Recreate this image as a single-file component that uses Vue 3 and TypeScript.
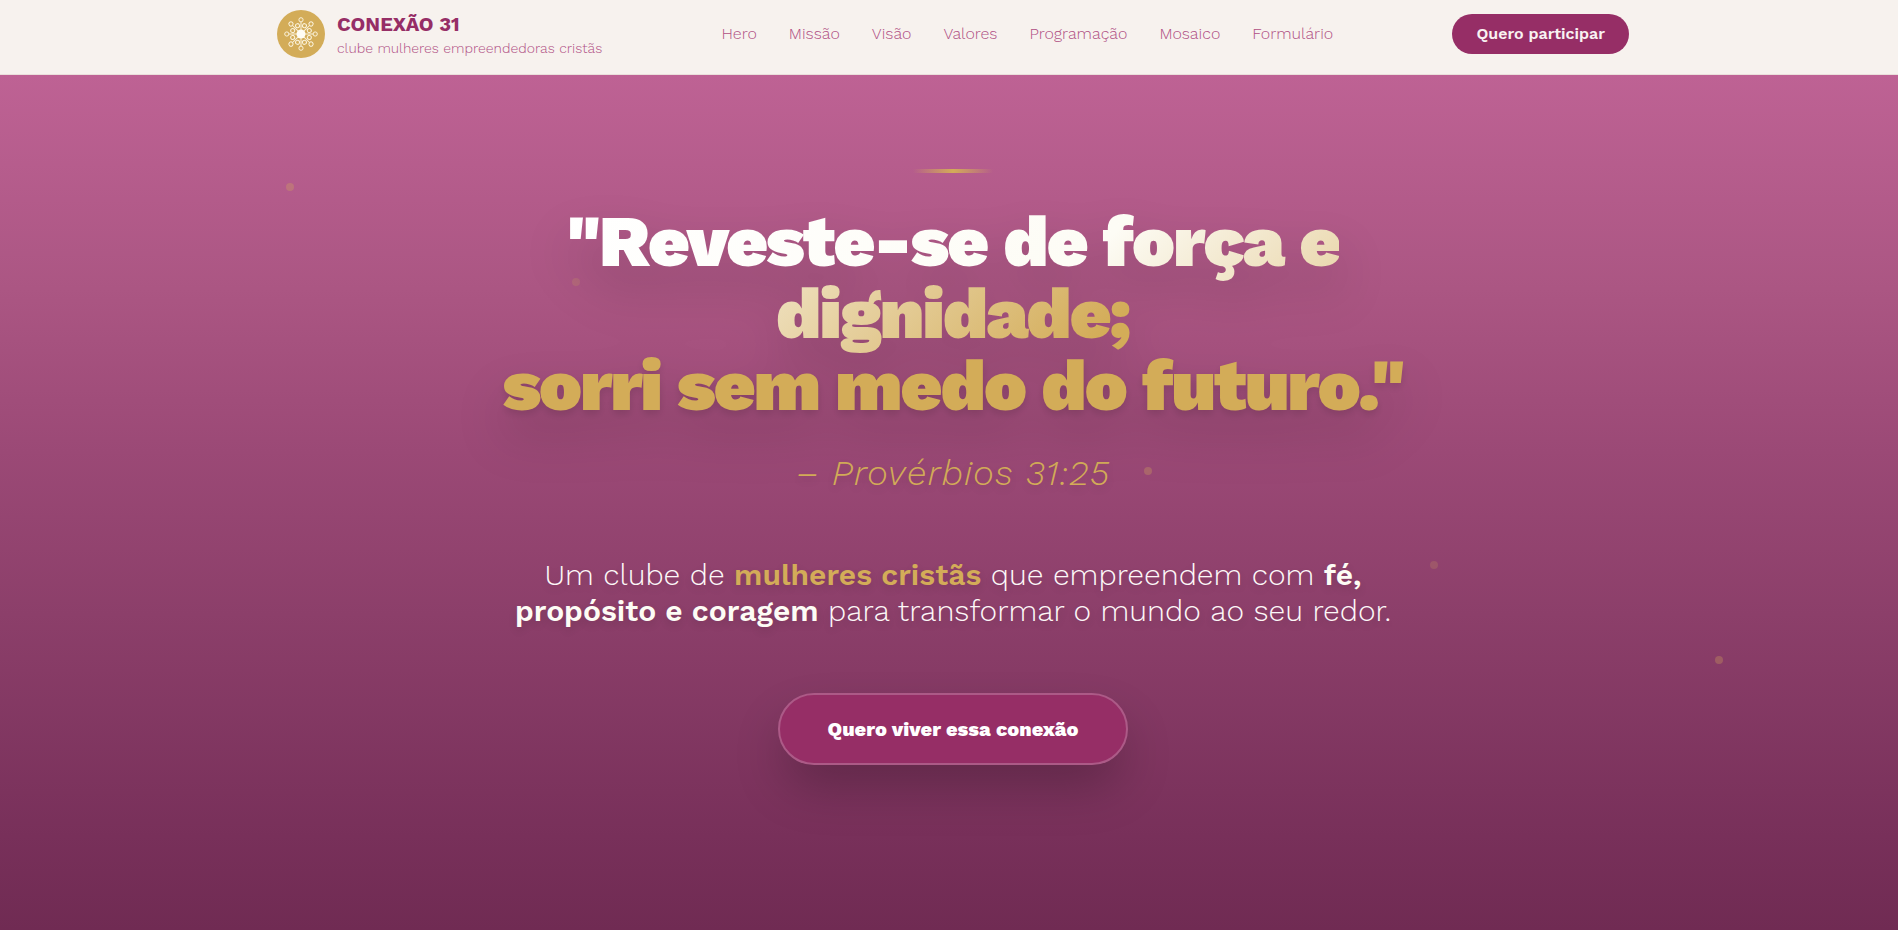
<script setup lang="ts">
interface NavItem {
  label: string
  href: string
}

interface Particle {
  left: number
  top: number
  opacity: number
}

const navItems: NavItem[] = [
  { label: 'Hero', href: '#hero' },
  { label: 'Missão', href: '#missao' },
  { label: 'Visão', href: '#visao' },
  { label: 'Valores', href: '#valores' },
  { label: 'Programação', href: '#programacao' },
  { label: 'Mosaico', href: '#mosaico' },
  { label: 'Formulário', href: '#formulario' },
]

const particles: Particle[] = [0.3, 0.2, 0.1, 0.3, 0.2, 0.3].map((opacity, i) => ({
  left: 15 * (i + 1),
  top: 108 + Math.round(94.5 * i),
  opacity,
}))

const angles: number[] = [0, 45, 90, 135, 180, 225, 270, 315]
</script>

<template>
  <div class="page">
    <header class="topbar">
      <div class="topbar-inner">
        <a class="brand" href="#hero">
          <svg class="brand-mark" viewBox="0 0 48 48" aria-hidden="true">
            <circle cx="24" cy="24" r="24" fill="#d3ac58" />
            <g fill="none" stroke="#fbf3dc" stroke-width="1">
              <g v-for="a in angles" :key="a" :transform="`rotate(${a} 24 24)`">
                <path d="M24 20V12" />
                <circle cx="24" cy="9.800" r="2.100" />
              </g>
              <g v-for="a in angles" :key="a" :transform="`rotate(${a + 22.5} 24 24)`">
                <circle cx="24" cy="15" r="2" />
              </g>
            </g>
            <circle cx="24" cy="24" r="4.500" fill="#fffdf5" />
          </svg>
          <span class="brand-text">
            <span class="brand-name">CONEXÃO 31</span>
            <span class="brand-tag">clube mulheres empreendedoras cristãs</span>
          </span>
        </a>
        <nav class="nav" aria-label="Principal">
          <a v-for="item in navItems" :key="item.href" :href="item.href">{{ item.label }}</a>
        </nav>
        <button class="join" type="button">Quero participar</button>
      </div>
    </header>

    <main id="hero" class="hero">
      <div class="particles" aria-hidden="true">
        <span
          v-for="p in particles"
          :key="p.left"
          class="particle"
          :style="{ left: `${p.left}%`, top: `${p.top}px`, opacity: p.opacity }"
        ></span>
      </div>
      <div class="hero-inner">
        <div class="ornament"></div>
        <h1 class="verse">
          <span class="verse-fade">"Reveste-se de força e<br />dignidade;</span><br />
          <span class="verse-gold">sorri sem medo do futuro."</span>
        </h1>
        <p class="source">– Provérbios 31:25</p>
        <p class="lead">
          Um clube de <strong class="gold">mulheres cristãs</strong> que empreendem com
          <strong>fé,<br />propósito e coragem</strong> para transformar o mundo ao seu redor.
        </p>
        <button class="cta" type="button">Quero viver essa conexão</button>
      </div>
    </main>
  </div>
</template>

<style>
body {
  margin: 0;
  overflow-x: hidden;
}
</style>

<style scoped>
.page {
  --gold: #d3ac58;
  --wine: #962e66;
  --rose: #b04f84;
  width: calc(100% + 8px);
  min-height: 100vh;
  display: flex;
  flex-direction: column;
  font-family: 'Work Sans', Inter, 'Liberation Sans', sans-serif;
}

.topbar {
  background: #f7f2ee;
  border-bottom: 1px solid #eadfdb;
}

.topbar-inner {
  box-sizing: border-box;
  max-width: 1400px;
  height: 74px;
  margin: 0 auto;
  padding: 0 24px 6px;
  display: flex;
  align-items: center;
  justify-content: space-between;
}

.brand {
  display: flex;
  align-items: center;
  gap: 12px;
  text-decoration: none;
}

.brand-mark {
  width: 48px;
  height: 48px;
}

.brand-text {
  display: flex;
  flex-direction: column;
}

.brand-name {
  font-size: 20px;
  line-height: 28px;
  font-weight: 700;
  color: var(--wine);
}

.brand-tag {
  font-size: 14px;
  line-height: 20px;
  font-weight: 300;
  color: var(--rose);
}

.nav {
  display: flex;
  gap: 32px;
}

.nav a {
  font-size: 16px;
  line-height: 24px;
  font-weight: 300;
  color: var(--rose);
  text-decoration: none;
}

.join {
  padding: 8px 24px;
  border: 0;
  border-radius: 20px;
  background: var(--wine);
  color: #f9f2f2;
  font-family: inherit;
  font-size: 16px;
  line-height: 24px;
  font-weight: 600;
}

.hero {
  position: relative;
  flex: 1;
  display: flex;
  justify-content: center;
  background: linear-gradient(
    180deg,
    #be6294 0%,
    #ab5683 25%,
    #9b4976 44%,
    #8c3f6a 63%,
    #78305a 89%,
    #702b53 100%
  );
}

.particles {
  position: absolute;
  inset: 0;
  overflow: hidden;
}

.particle {
  position: absolute;
  width: 8px;
  height: 8px;
  border-radius: 50%;
  background: var(--gold);
}

.hero-inner {
  position: relative;
  display: flex;
  flex-direction: column;
  align-items: center;
  padding: 94px 24px 96px;
  text-align: center;
}

.ornament {
  width: 80px;
  height: 4px;
  background: linear-gradient(90deg, transparent, var(--gold), transparent);
}

.verse {
  margin: 32px 0 0;
  font-size: 72px;
  line-height: 72px;
  font-weight: 900;
  letter-spacing: -0.025em;
  filter: drop-shadow(0 25px 25px rgba(0, 0, 0, 0.15));
}

.verse-fade {
  background: linear-gradient(135deg, #ffffff 0%, #fdfcf5 48%, var(--gold) 96%);
  background-clip: text;
  -webkit-background-clip: text;
  color: transparent;
}

.verse-gold {
  color: var(--gold);
  text-shadow: 0 4px 8px rgba(0, 0, 0, 0.12);
}

.source {
  margin: 32px 0 0;
  font-size: 36px;
  line-height: 40px;
  font-weight: 300;
  font-style: oblique;
  letter-spacing: 0.025em;
  color: var(--gold);
  text-shadow: 0 4px 8px rgba(0, 0, 0, 0.12);
}

.lead {
  margin: 64px 0 0;
  font-size: 30px;
  line-height: 36px;
  font-weight: 300;
  color: #fdf8f8;
  text-shadow: 0 4px 8px rgba(0, 0, 0, 0.12);
}

.lead strong {
  font-weight: 600;
  color: #fdfcf5;
}

.lead .gold {
  color: var(--gold);
}

.cta {
  margin-top: 64px;
  padding: 20px 48px;
  border: 2px solid #ac5a87;
  border-radius: 36px;
  background: var(--wine);
  color: #ffffff;
  font-family: inherit;
  font-size: 20px;
  line-height: 28px;
  font-weight: 800;
  box-shadow: 0 25px 50px -6px rgba(0, 0, 0, 0.25);
}
</style>
